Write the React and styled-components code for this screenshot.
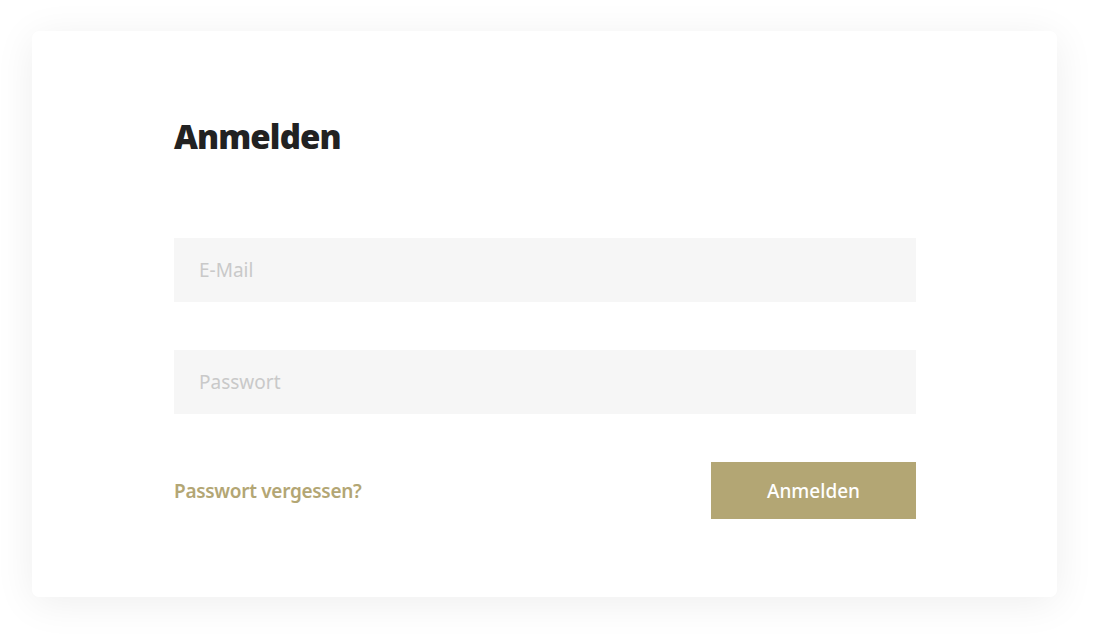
import styled, { createGlobalStyle } from "styled-components";

const GlobalStyle = createGlobalStyle`
    html, body {
        margin: 0;
        padding: 0;
        background: #ffffff;
        font-family: "Noto Sans", "Open Sans", sans-serif;
    }
`;

const Page = styled.div`
    width: 1114px;
    height: 636px;
    padding: 31px 57px 0 32px;
    box-sizing: border-box;
`;

const Card = styled.div`
    width: 1025px;
    height: 566px;
    box-sizing: border-box;
    padding: 78px 141px 0 142px;
    background: #ffffff;
    border-radius: 7px;
    box-shadow: 0 6px 40px rgba(0, 0, 0, 0.07);
`;

const Title = styled.h1`
    margin: 0 0 73px;
    font-family: "Open Sans", sans-serif;
    font-weight: 800;
    font-size: 33px;
    line-height: 56px;
    letter-spacing: -0.9px;
    color: #222222;
`;

const Form = styled.form`
    display: flex;
    flex-direction: column;
    gap: 48px;
`;

const Field = styled.input`
    height: 64px;
    width: 100%;
    box-sizing: border-box;
    border: none;
    outline: none;
    padding: 0 25px;
    background: #f6f6f6;
    font-family: "Noto Sans", sans-serif;
    font-size: 19px;
    color: #333;

    &::placeholder {
        color: #c9c9c9;
    }
`;

const Actions = styled.div`
    display: flex;
    align-items: center;
    justify-content: space-between;
`;

const Forgot = styled.a`
    color: #b3a674;
    font-size: 19px;
    font-weight: 600;
    text-decoration: none;
    letter-spacing: -0.3px;
    cursor: pointer;
`;

const Submit = styled.button`
    width: 205px;
    height: 57px;
    border: none;
    background: #b3a674;
    color: #ffffff;
    font-family: "Noto Sans", sans-serif;
    font-size: 19px;
    font-weight: 500;
    cursor: pointer;
`;

const App = () => {
    return (
        <Page>
            <GlobalStyle />
            <Card>
                <Title>Anmelden</Title>
                <Form onSubmit={(ev) => ev.preventDefault()}>
                    <Field type="email" placeholder="E-Mail" />
                    <Field type="password" placeholder="Passwort" />
                    <Actions>
                        <Forgot>Passwort vergessen?</Forgot>
                        <Submit type="submit">Anmelden</Submit>
                    </Actions>
                </Form>
            </Card>
        </Page>
    );
};

export default App;
